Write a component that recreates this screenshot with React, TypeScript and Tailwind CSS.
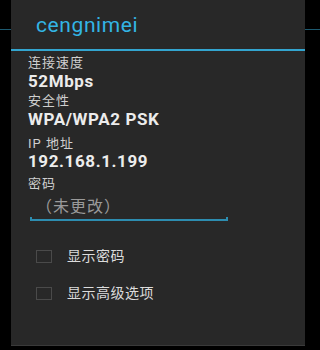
export default function App() {
  const font = { fontFamily: 'Roboto, "Noto Sans CJK SC", sans-serif' }
  return (
    <div className="relative h-[350px] w-[320px] overflow-hidden bg-black" style={font}>
      {/* faint line of the screen behind the dialog */}
      <div className="absolute left-0 right-0 top-[29px] h-px bg-[#1d5a70]" />

      <div className="relative ml-[11px] flex h-[346px] w-[294px] flex-col border-b border-[#3a3a3a] bg-[#282828]">
        <div className="flex h-[49px] items-center pl-[25px] pt-[2px]">
          <span className="text-[21px] leading-none tracking-[0.6px] text-[#33b5e5]">cengnimei</span>
        </div>
        <div className="h-[2px] bg-[#33a5cf]" />

        <div className="flex flex-col pl-[17px] pt-[4px]">
          <div className="text-[13px] leading-[16px] tracking-[1px] text-[#cfcfcf]">连接速度</div>
          <div className="text-[17px] font-bold leading-[20px] tracking-[0.6px] text-[#ececec]">52Mbps</div>

          <div className="mt-[2px] text-[13px] leading-[16px] tracking-[1px] text-[#cfcfcf]">安全性</div>
          <div className="text-[17px] font-bold leading-[20px] tracking-[0.6px] text-[#ececec]">WPA/WPA2 PSK</div>

          <div className="mt-[7px] text-[13px] leading-[16px] tracking-[1px] text-[#cfcfcf]">IP 地址</div>
          <div className="-mt-[1px] text-[17px] font-bold leading-[20px] tracking-[0.6px] text-[#ececec]">192.168.1.199</div>

          <div className="mt-[5px] text-[13px] leading-[16px] tracking-[1px] text-[#cfcfcf]">密码</div>

          <div className="ml-[2px] mt-[6px] w-[198px]">
            <div className="pl-[6px] text-[16px] leading-[18px] tracking-[1px] text-[#9a9a9a]">（未更改）</div>
            <div className="mt-[1px] flex h-[4px] items-end">
              <div className="h-[4px] w-[2px] bg-[#2d8db0]" />
              <div className="h-[2px] flex-1 bg-[#2d8db0]" />
              <div className="h-[4px] w-[2px] bg-[#2d8db0]" />
            </div>
          </div>

          <div className="mt-[27px] flex flex-col gap-[21px] pl-[8px]">
            <label className="flex items-center gap-[15px]">
              <span className="h-[13px] w-[16px] border border-[#4a4a4a]" />
              <span className="text-[14px] leading-[16px] tracking-[0.5px] text-[#dcdcdc]">显示密码</span>
            </label>
            <label className="flex items-center gap-[15px]">
              <span className="h-[13px] w-[16px] border border-[#4a4a4a]" />
              <span className="text-[14px] leading-[16px] tracking-[0.5px] text-[#dcdcdc]">显示高级选项</span>
            </label>
          </div>
        </div>
      </div>
    </div>
  )
}
